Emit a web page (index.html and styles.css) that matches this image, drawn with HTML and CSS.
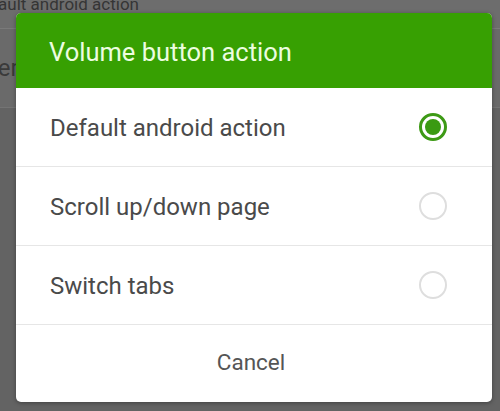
FILE: index.html
```html
<!DOCTYPE html>
<html>
<head>
<meta charset="utf-8">
<link rel="stylesheet" href="styles.css">
</head>
<body>
<div class="page">
  <div class="page-row first"><span class="page-text">Default android action</span></div>
  <div class="page-row second"><span class="page-title">Ver</span></div>
</div>
<div class="dialog">
  <div class="dialog-header">Volume button action</div>
  <div class="option">
    <span class="option-label">Default android action</span>
    <span class="radio checked"></span>
  </div>
  <div class="option">
    <span class="option-label">Scroll up/down page</span>
    <span class="radio"></span>
  </div>
  <div class="option">
    <span class="option-label">Switch tabs</span>
    <span class="radio"></span>
  </div>
  <div class="cancel">Cancel</div>
</div>
</body>
</html>
```
FILE: styles.css
```css
html, body {
  margin: 0;
  padding: 0;
  width: 500px;
  height: 411px;
  overflow: hidden;
  background: #636363;
  font-family: Roboto, "Liberation Sans", sans-serif;
}
.page {
  display: flex;
  flex-direction: column;
}
.page-row {
  display: flex;
  align-items: center;
  overflow: hidden;
  white-space: nowrap;
}
.page-row.first {
  height: 28px;
  align-items: flex-start;
  background: #6d6d6d;
  border-bottom: 1px solid #7a7a7a;
}
.page-text {
  font-size: 17px;
  color: #353535;
  margin-left: -28px;
  margin-top: -6px;
}
.page-row.second {
  height: 78px;
  background: #6a6a6a;
  border-bottom: 1px solid #747474;
}
.page-title {
  font-size: 24px;
  color: #3a3a3a;
  margin-left: -17px;
}
.dialog {
  position: absolute;
  left: 16px;
  top: 13px;
  width: 476px;
  height: 389px;
  background: #ffffff;
  border-radius: 5px;
  overflow: hidden;
  display: flex;
  flex-direction: column;
  box-shadow: 0 1px 4px rgba(0,0,0,0.35);
}
.dialog-header {
  height: 75px;
  flex: none;
  background: #37a002;
  color: #ecfde0;
  font-size: 25.5px;
  display: flex;
  align-items: center;
  padding-left: 33px;
  padding-top: 3px;
  box-sizing: border-box;
}
.option {
  height: 79px;
  flex: none;
  box-sizing: border-box;
  border-bottom: 1px solid #e6e6e6;
  display: flex;
  align-items: center;
  justify-content: space-between;
  padding-left: 34px;
  padding-right: 45px;
}
.option-label {
  font-size: 24px;
  color: #4a4a4a;
  padding-top: 1px;
}
.radio {
  width: 28px;
  height: 28px;
  box-sizing: border-box;
  border-radius: 50%;
  border: 2px solid #dedede;
  display: flex;
  align-items: center;
  justify-content: center;
}
.radio.checked {
  border: 3px solid #3d9a15;
}
.radio.checked::after {
  content: "";
  width: 16px;
  height: 16px;
  border-radius: 50%;
  background: #3a9a12;
}
.cancel {
  flex: 1;
  display: flex;
  align-items: center;
  justify-content: center;
  font-size: 22.5px;
  color: #555555;
  padding-right: 6px;
  padding-bottom: 3px;
}
```
